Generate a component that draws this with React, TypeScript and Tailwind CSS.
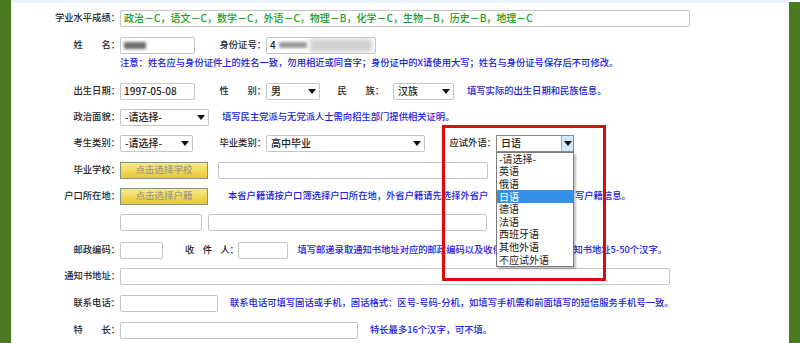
import React from 'react';

const Arrow = () => (
  <svg width="8" height="5" viewBox="0 0 8 5" className="shrink-0">
    <polygon points="0,0 8,0 4,5" fill="#111" />
  </svg>
);

const Label: React.FC<{ className: string; children: React.ReactNode }> = ({ className, children }) => (
  <span className={`shrink-0 whitespace-nowrap text-right text-[#262626] ${className}`}>{children}</span>
);

const Box: React.FC<{ className: string; children?: React.ReactNode }> = ({ className, children }) => (
  <div className={`flex h-[17px] shrink-0 items-center overflow-hidden rounded-[2px] border border-[#c6c6c6] bg-white px-[3px] text-[10px] text-[#222] ${className}`}>
    {children}
  </div>
);

const Select: React.FC<{ className: string; value: string }> = ({ className, value }) => (
  <div className={`flex h-[17px] shrink-0 items-center rounded-[2px] border border-[#c6c6c6] bg-white pl-[4px] pr-[3px] text-[10px] text-[#222] ${className}`}>
    <span className="flex-1 whitespace-nowrap">{value}</span>
    <Arrow />
  </div>
);

const Note: React.FC<{ className?: string; children: React.ReactNode }> = ({ className = '', children }) => (
  <span className={`shrink-0 whitespace-nowrap text-[#2020e0] ${className}`}>{children}</span>
);

const YellowButton: React.FC<{ text: string }> = ({ text }) => (
  <button className="flex h-[17px] w-[88px] shrink-0 items-center justify-center border border-[#789a82] bg-gradient-to-b from-[#f8e98e] via-[#f1d95a] to-[#e6c63a] text-[9.5px] text-[#a09c84]">
    {text}
  </button>
);

const languages = ['-请选择-', '英语', '俄语', '日语', '德语', '法语', '西班牙语', '其他外语', '不应试外语'];

export default function App() {
  return (
    <div className="flex h-[343px] w-[800px] overflow-hidden bg-white font-['Noto_Sans_CJK_SC',sans-serif] text-[9.3px] font-medium leading-none">
      <div className="w-[11px] shrink-0 bg-[#4a7b1f]" />

      <div className="relative flex flex-1 flex-col">
        <div className="h-[3px] bg-[#edf2f7]" />

        {/* 学业水平成绩 */}
        <div className="mt-[2px] flex h-[26px] items-center">
          <Label className="w-[109px]">学业水平成绩：</Label>
          <Box className="w-[570px] text-[10.7px] text-[#239a23]">
            政治－C，语文－C，数学－C，外语－C，物理－B，化学－C，生物－B，历史－B，地理－C
          </Box>
        </div>

        {/* 姓名 / 身份证号 */}
        <div className="mt-[2px] flex h-[24px] items-center">
          <Label className="w-[109px]">姓　　名：</Label>
          <Box className="w-[75px]">
            <span className="h-[7px] w-[22px] bg-[#6b6b6b] blur-[1.5px]" />
          </Box>
          <Label className="w-[71px]">身份证号：</Label>
          <Box className="w-[110px] gap-[3px]">
            <span>4</span>
            <span className="h-[6px] w-[28px] bg-[#9a9a9a] blur-[1.5px]" />
            <span className="h-[13px] w-[62px] bg-[#d2d2d2] blur-[2px]" />
          </Box>
        </div>

        {/* 注意 */}
        <div className="flex h-[12px] items-center pl-[109px]">
          <Note>注意：姓名应与身份证件上的姓名一致，勿用相近或同音字；身份证中的X请使用大写；姓名与身份证号保存后不可修改。</Note>
        </div>

        {/* 出生日期 / 性别 / 民族 */}
        <div className="mt-[9px] flex h-[26px] items-center">
          <Label className="w-[109px]">出生日期：</Label>
          <Box className="w-[75px]">1997-05-08</Box>
          <Label className="w-[71px]">性　　别：</Label>
          <Select className="w-[54px]" value="男" />
          <Label className="w-[64px]">民　　族：</Label>
          <Select className="ml-[9px] w-[61px]" value="汉族" />
          <Note className="ml-[13px]">填写实际的出生日期和民族信息。</Note>
        </div>

        {/* 政治面貌 */}
        <div className="flex h-[26px] items-center">
          <Label className="w-[109px]">政治面貌：</Label>
          <Select className="w-[89px]" value="-请选择-" />
          <Note className="ml-[13px]">填写民主党派与无党派人士需向招生部门提供相关证明。</Note>
        </div>

        {/* 考生类别 / 毕业类别 / 应试外语 */}
        <div className="flex h-[26px] items-center">
          <Label className="w-[109px]">考生类别：</Label>
          <Select className="w-[73px]" value="-请选择-" />
          <Label className="w-[73px]">毕业类别：</Label>
          <Select className="w-[159px]" value="高中毕业" />
          <Label className="w-[71px]">应试外语：</Label>
          <div className="relative flex h-[17px] w-[78px] shrink-0 items-center border border-[#8a8a8a] bg-white pl-[4px] text-[10px] text-[#222]">
            <span className="flex-1">日语</span>
            <span className="flex h-full w-[12px] items-center justify-center border-l border-[#7fb3e6] bg-[#d3e9fb]">
              <Arrow />
            </span>
            <ul className="absolute left-[-1px] top-[16px] z-10 w-[78px] border border-[#7a7a7a] bg-white shadow-[2px_2px_2px_rgba(0,0,0,0.25)]">
              {languages.map((l) => (
                <li
                  key={l}
                  className={`flex h-[12.6px] items-center pl-[2px] text-[10px] font-normal ${l === '日语' ? 'bg-[#3490ea] text-white' : 'text-[#1a1a1a]'}`}
                >
                  {l}
                </li>
              ))}
            </ul>
          </div>
        </div>

        {/* 毕业学校 */}
        <div className="mt-[1px] flex h-[26px] items-center">
          <Label className="w-[109px]">毕业学校：</Label>
          <YellowButton text="点击选择学校" />
          <Box className="ml-[10px] w-[270px]" />
        </div>

        {/* 户口所在地 */}
        <div className="flex h-[26px] items-center">
          <Label className="w-[109px]">户口所在地：</Label>
          <YellowButton text="点击选择户籍" />
          <Note className="ml-[20px] w-[262px]">本省户籍请按户口簿选择户口所在地，外省户籍请先选择外省户</Note>
          <Note className="ml-[85px]">写户籍信息。</Note>
        </div>

        <div className="flex h-[26px] items-center pl-[109px]">
          <Box className="w-[82px]" />
          <Box className="ml-[6px] w-[279px]" />
        </div>

        {/* 邮政编码 / 收件人 */}
        <div className="mt-[2px] flex h-[26px] items-center">
          <Label className="w-[109px]">邮政编码：</Label>
          <Box className="w-[43px]" />
          <Label className="ml-[22px] tracking-[-0.4px]">收　件　人：</Label>
          <Box className="w-[50px]" />
          <Note className="ml-[9px] w-[196px]">填写邮递录取通知书地址对应的邮政编码以及收件</Note>
          <Note className="ml-[80px]">知书地址5-50个汉字。</Note>
        </div>

        {/* 通知书地址 */}
        <div className="flex h-[26px] items-center">
          <Label className="w-[109px]">通知书地址：</Label>
          <Box className="w-[550px]" />
        </div>

        {/* 联系电话 */}
        <div className="mt-[1px] flex h-[26px] items-center">
          <Label className="w-[109px]">联系电话：</Label>
          <Box className="w-[98px]" />
          <Note className="ml-[12px]">联系电话可填写固话或手机，固话格式：区号-号码-分机，如填写手机需和前面填写的短信服务手机号一致。</Note>
        </div>

        {/* 特长 */}
        <div className="mt-[1px] flex h-[26px] items-center">
          <Label className="w-[109px]">特　　长：</Label>
          <Box className="w-[238px]" />
          <Note className="ml-[12px]">特长最多16个汉字，可不填。</Note>
        </div>

        {/* red annotation box */}
        <div className="absolute left-[431px] top-[125px] z-20 h-[156px] w-[164px] border-[3px] border-[#e10a0a]" />
      </div>

      <div className="mt-[2px] w-[11px] shrink-0 bg-[#4a7b1f]" />
    </div>
  );
}
